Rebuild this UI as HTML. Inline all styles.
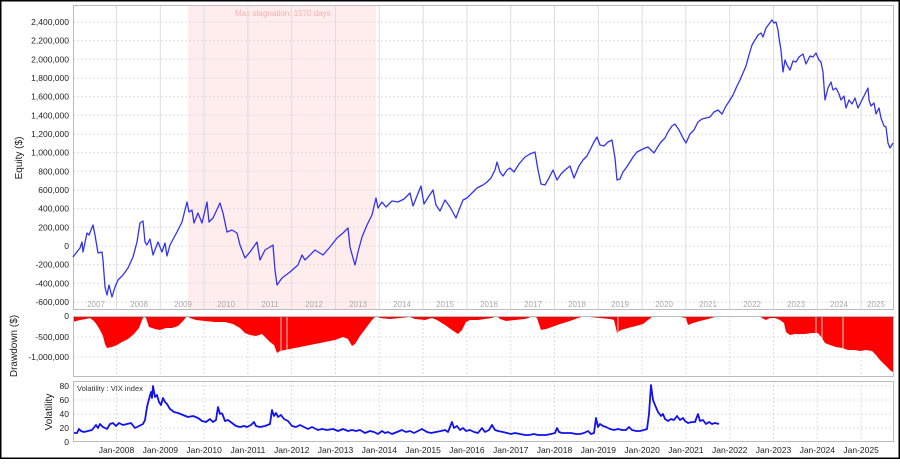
<!DOCTYPE html>
<html><head><meta charset="utf-8"><style>
html,body{margin:0;padding:0;background:#fff}
body{width:900px;height:459px;overflow:hidden;font-family:"Liberation Sans",sans-serif}
</style></head><body>
<svg width="900" height="459" viewBox="0 0 900 459" xmlns="http://www.w3.org/2000/svg" font-family="Liberation Sans, sans-serif">
<rect x="0.5" y="0.5" width="899" height="458" fill="#fff" stroke="#000" stroke-width="2"/>
<rect x="188" y="5" width="188" height="305" fill="#ffeded"/>
<text x="235" y="16" font-size="8" fill="#f6b0b0">Max stagnation: 1570 days</text>
<g stroke="#ddd" stroke-dasharray="2,2" stroke-width="1">
<line x1="73" x2="893" y1="22" y2="22"/><line x1="73" x2="893" y1="40.7" y2="40.7"/><line x1="73" x2="893" y1="59.3" y2="59.3"/><line x1="73" x2="893" y1="78" y2="78"/><line x1="73" x2="893" y1="96.7" y2="96.7"/><line x1="73" x2="893" y1="115.3" y2="115.3"/><line x1="73" x2="893" y1="134" y2="134"/><line x1="73" x2="893" y1="152.7" y2="152.7"/><line x1="73" x2="893" y1="171.3" y2="171.3"/><line x1="73" x2="893" y1="190" y2="190"/><line x1="73" x2="893" y1="208.7" y2="208.7"/><line x1="73" x2="893" y1="227.3" y2="227.3"/><line x1="73" x2="893" y1="246" y2="246"/><line x1="73" x2="893" y1="264.7" y2="264.7"/><line x1="73" x2="893" y1="283.3" y2="283.3"/><line x1="73" x2="893" y1="302" y2="302"/>
</g>
<g stroke="#ddd" stroke-width="1">
<line x1="116.5" x2="116.5" y1="5" y2="310"/><line x1="160.3" x2="160.3" y1="5" y2="310"/><line x1="204.1" x2="204.1" y1="5" y2="310"/><line x1="247.9" x2="247.9" y1="5" y2="310"/><line x1="291.7" x2="291.7" y1="5" y2="310"/><line x1="335.5" x2="335.5" y1="5" y2="310"/><line x1="379.3" x2="379.3" y1="5" y2="310"/><line x1="423.1" x2="423.1" y1="5" y2="310"/><line x1="466.9" x2="466.9" y1="5" y2="310"/><line x1="510.7" x2="510.7" y1="5" y2="310"/><line x1="554.5" x2="554.5" y1="5" y2="310"/><line x1="598.3" x2="598.3" y1="5" y2="310"/><line x1="642.1" x2="642.1" y1="5" y2="310"/><line x1="685.9" x2="685.9" y1="5" y2="310"/><line x1="729.7" x2="729.7" y1="5" y2="310"/><line x1="773.5" x2="773.5" y1="5" y2="310"/><line x1="817.3" x2="817.3" y1="5" y2="310"/><line x1="861.1" x2="861.1" y1="5" y2="310"/>
</g>
<g font-size="8" fill="#aaa" text-anchor="middle">
<text x="96" y="307">2007</text><text x="139" y="307">2008</text><text x="183" y="307">2009</text><text x="226" y="307">2010</text><text x="270" y="307">2011</text><text x="314" y="307">2012</text><text x="358" y="307">2013</text><text x="402" y="307">2014</text><text x="445" y="307">2015</text><text x="489" y="307">2016</text><text x="533" y="307">2017</text><text x="577" y="307">2018</text><text x="620" y="307">2019</text><text x="664" y="307">2020</text><text x="708" y="307">2021</text><text x="752" y="307">2022</text><text x="796" y="307">2023</text><text x="839" y="307">2024</text><text x="876" y="307">2025</text>
</g>
<rect x="73.5" y="5.5" width="820" height="304" fill="none" stroke="#bbb"/>
<g font-size="8.5" fill="#222" text-anchor="end">
<text x="69" y="25">2,400,000</text><text x="69" y="43.7">2,200,000</text><text x="69" y="62.3">2,000,000</text><text x="69" y="81">1,800,000</text><text x="69" y="99.7">1,600,000</text><text x="69" y="118.3">1,400,000</text><text x="69" y="137">1,200,000</text><text x="69" y="155.7">1,000,000</text><text x="69" y="174.3">800,000</text><text x="69" y="193">600,000</text><text x="69" y="211.7">400,000</text><text x="69" y="230.3">200,000</text><text x="69" y="249">0</text><text x="69" y="267.7">-200,000</text><text x="69" y="286.3">-400,000</text><text x="69" y="305">-600,000</text>
</g>
<text transform="translate(22,158) rotate(-90)" font-size="10" fill="#222" text-anchor="middle">Equity ($)</text>
<polyline fill="none" stroke="#3333ee" stroke-width="1.3" stroke-linejoin="round" points="73,257 80,248 82,242 83,252 87,233 89,235 93,225 95,235 98,253 102,252 103,260 105,287 107,295 109,285 112,297 115,287 118,280 123,275 128,268 133,257 137,242 140,223 143,221 145,242 147,245 150,239 153,255 158,242 162,252 165,243 167,256 170,245 177,232 182,222 187,202 189,212 192,210 194,223 198,213 202,223 207,202 209,222 213,218 220,203 223,213 227,232 232,230 237,233 240,245 245,258 250,252 257,242 260,260 265,250 270,247 273,245 275,270 277,285 282,278 290,272 298,265 302,255 305,260 315,250 323,255 330,247 337,238 343,233 348,228 350,247 353,258 355,265 358,252 362,237 367,225 372,215 376,198 378,208 382,202 386,207 392,201 398,202 404,199 410,193 413,206 417,196 421,186 424,204 429,196 433,190 436,205 440,211 445,200 450,207 456,218 459,210 463,200 467,198 472,193 477,188 483,185 487,182 491,178 495,170 497,162 500,172 503,176 507,170 510,168 514,172 519,164 525,157 530,154 535,152 538,170 541,184 545,185 549,178 553,170 557,180 561,174 565,170 570,166 574,178 579,166 583,160 587,156 590,150 594,142 597,137 600,145 604,146 608,142 612,140 615,158 617,180 620,179 623,172 626,168 630,162 633,157 637,152 641,150 645,148 648,147 651,150 654,153 657,148 661,142 665,138 668,132 672,126 675,124 679,130 683,138 686,143 690,134 694,130 698,122 702,119 706,118 710,117 714,112 718,110 722,114 726,106 730,100 733,95 737,86 740,80 743,73 746,66 749,55 752,45 755,40 758,35 761,33 763,37 766,28 769,24 772,20 774,23 776,22 778,30 779,38 781,50 783,72 785,60 787,65 790,70 793,61 796,62 799,57 803,54 806,64 810,56 813,57 816,53 819,60 821,62 823,72 825,100 828,88 831,82 833,90 836,88 839,94 841,100 844,96 846,108 849,100 852,104 855,98 858,108 861,102 864,96 866,92 868,88 869,100 871,106 874,103 876,114 879,108 881,118 884,126 886,127 888,143 890,148 893,143"/>
<g stroke="#ddd" stroke-dasharray="2,2">
<line x1="73" x2="893" y1="337" y2="337"/><line x1="73" x2="893" y1="357" y2="357"/>
<line x1="116.5" x2="116.5" y1="316" y2="376"/><line x1="160.3" x2="160.3" y1="316" y2="376"/><line x1="204.1" x2="204.1" y1="316" y2="376"/><line x1="247.9" x2="247.9" y1="316" y2="376"/><line x1="291.7" x2="291.7" y1="316" y2="376"/><line x1="335.5" x2="335.5" y1="316" y2="376"/><line x1="379.3" x2="379.3" y1="316" y2="376"/><line x1="423.1" x2="423.1" y1="316" y2="376"/><line x1="466.9" x2="466.9" y1="316" y2="376"/><line x1="510.7" x2="510.7" y1="316" y2="376"/><line x1="554.5" x2="554.5" y1="316" y2="376"/><line x1="598.3" x2="598.3" y1="316" y2="376"/><line x1="642.1" x2="642.1" y1="316" y2="376"/><line x1="685.9" x2="685.9" y1="316" y2="376"/><line x1="729.7" x2="729.7" y1="316" y2="376"/><line x1="773.5" x2="773.5" y1="316" y2="376"/><line x1="817.3" x2="817.3" y1="316" y2="376"/><line x1="861.1" x2="861.1" y1="316" y2="376"/>
</g>
<polygon fill="#ff0000" points="73,316 73,322 80,320 86,319 90,318 94,321 97,325 100,330 103,336 105,344 107,348 112,347 117,345 122,342 128,339 134,334 139,328 142,320 144,316 146,318 149,327 155,329 160,330 166,328 172,328 178,326 183,321 187,316 190,318 196,320 205,321 215,322 225,322 233,324 240,328 245,333 250,335 256,336 262,334 266,338 270,342 274,345 277,353 280,351 285,350 295,348 305,346 315,344 325,342 335,340 343,337 348,339 352,346 355,344 360,336 366,328 372,320 376,316 380,318 390,319 400,318 410,317 415,319 425,320 432,318 437,320 445,325 452,330 458,334 462,330 466,322 470,320 478,320 485,319 492,318 497,316 500,319 506,321 515,320 525,319 534,316 537,318 541,330 546,329 552,327 560,324 570,321 578,318 585,316 590,317 600,318 610,319 614,320 617,333 621,330 628,328 636,326 643,324 648,320 652,317 660,317 670,317 680,317 686,318 688,325 693,323 700,321 708,319 715,317 722,317 730,316 760,316 762,318 766,320 770,318 775,318 780,320 784,323 786,332 790,335 795,334 800,334 805,334 812,333 818,333 822,338 825,343 830,345 836,347 842,348 848,350 855,350 860,351 866,350 872,351 876,355 880,360 884,364 888,368 891,371 893,372 893,316"/>
<g stroke="#fff" stroke-width="0.8"><line x1="281" x2="281" y1="316" y2="354"/><line x1="287" x2="287" y1="316" y2="354"/><line x1="618" x2="618" y1="316" y2="336"/><line x1="816" x2="816" y1="316" y2="345"/><line x1="822" x2="822" y1="316" y2="345"/><line x1="843" x2="843" y1="316" y2="350"/></g>
<rect x="73.5" y="316.5" width="820" height="60" fill="none" stroke="#bbb"/>
<g font-size="8.5" fill="#222" text-anchor="end"><text x="69" y="319">0</text><text x="69" y="340">-500,000</text><text x="69" y="360">-1,000,000</text></g>
<text transform="translate(17,346) rotate(-90)" font-size="10" fill="#222" text-anchor="middle">Drawdown ($)</text>
<g stroke="#ddd" stroke-dasharray="2,2">
<line x1="73" x2="893" y1="386" y2="386"/><line x1="73" x2="893" y1="400" y2="400"/><line x1="73" x2="893" y1="414" y2="414"/><line x1="73" x2="893" y1="428" y2="428"/>
<line x1="116.5" x2="116.5" y1="381" y2="442"/><line x1="160.3" x2="160.3" y1="381" y2="442"/><line x1="204.1" x2="204.1" y1="381" y2="442"/><line x1="247.9" x2="247.9" y1="381" y2="442"/><line x1="291.7" x2="291.7" y1="381" y2="442"/><line x1="335.5" x2="335.5" y1="381" y2="442"/><line x1="379.3" x2="379.3" y1="381" y2="442"/><line x1="423.1" x2="423.1" y1="381" y2="442"/><line x1="466.9" x2="466.9" y1="381" y2="442"/><line x1="510.7" x2="510.7" y1="381" y2="442"/><line x1="554.5" x2="554.5" y1="381" y2="442"/><line x1="598.3" x2="598.3" y1="381" y2="442"/><line x1="642.1" x2="642.1" y1="381" y2="442"/><line x1="685.9" x2="685.9" y1="381" y2="442"/><line x1="729.7" x2="729.7" y1="381" y2="442"/><line x1="773.5" x2="773.5" y1="381" y2="442"/><line x1="817.3" x2="817.3" y1="381" y2="442"/><line x1="861.1" x2="861.1" y1="381" y2="442"/>
</g>
<text x="77" y="391" font-size="7.5" fill="#333">Volatility : VIX index</text>
<g fill="none" stroke="#1111ee" stroke-width="1.8" stroke-linejoin="round">
<polyline points="73,433 77,433 79,429 81,431 84,432 88,431 92,430 96,425 98,428 100,424 103,427 107,429 110,424 113,423 116,426 119,423 123,425 127,424 131,423 135,428 139,426 143,424 145,420 147,407 149,399 151,392 152,398 153,386 155,397 157,395 159,402 161,405 163,398 165,402 167,404 170,409 174,412 178,413 183,415 188,417 193,416 198,418 202,421 206,422 210,419 213,422 216,420 218,407 220,414 222,413"/>
<polyline points="222,413 225,421 228,420 232,423 236,426 240,427 244,426 247,427 251,425 254,422 256,426 260,427 265,426 270,424 272,410 274,416 276,413 278,417 281,415 284,419 288,421 292,426 296,427 300,425 304,427 308,429 312,427 318,430 322,429 327,430 333,429 338,431 343,429 348,431 352,430 356,431 360,430 365,433 370,431 374,432 378,434 382,431 385,433 388,432 392,434 397,432 402,430 406,432 410,431 414,433 418,431 422,429 427,432 431,433 436,432 441,431 445,430 448,432 452,422 454,428 457,426 460,430 463,428 466,431 470,430 474,432 478,433 482,428 485,432 489,430 492,425 495,430 498,431 503,432 507,433 511,434 515,433 520,434 525,435 529,435 534,434 538,435 542,435 546,435 551,434 555,433 557,428 559,432 562,433 566,433 571,433 576,434 580,434 584,433 588,431 591,434 594,433 596,418 598,427 600,424 603,426 606,427 610,429 614,430 618,429 622,430 626,430 629,427 632,430 636,431 640,431 644,430 647,429 649,414 651,385 653,400 655,405 658,412 661,416 663,414 665,419 668,421 671,419 674,420 677,416 680,420 683,418 685,421 688,423 692,422 695,422 698,414 700,421 703,420 706,424 709,422 712,424 715,423 719,424"/>
</g>
<rect x="73.5" y="381.5" width="820" height="60" fill="none" stroke="#bbb"/>
<g font-size="8.5" fill="#222" text-anchor="end"><text x="69" y="389">80</text><text x="69" y="403">60</text><text x="69" y="417">40</text><text x="69" y="431">20</text><text x="69" y="445">0</text></g>
<text transform="translate(52,412) rotate(-90)" font-size="10" fill="#222" text-anchor="middle">Volatility</text>
<g font-size="8.5" fill="#222" text-anchor="middle">
<text x="116.5" y="453">Jan-2008</text><text x="160.3" y="453">Jan-2009</text><text x="204.1" y="453">Jan-2010</text><text x="247.9" y="453">Jan-2011</text><text x="291.7" y="453">Jan-2012</text><text x="335.5" y="453">Jan-2013</text><text x="379.3" y="453">Jan-2014</text><text x="423.1" y="453">Jan-2015</text><text x="466.9" y="453">Jan-2016</text><text x="510.7" y="453">Jan-2017</text><text x="554.5" y="453">Jan-2018</text><text x="598.3" y="453">Jan-2019</text><text x="642.1" y="453">Jan-2020</text><text x="685.9" y="453">Jan-2021</text><text x="729.7" y="453">Jan-2022</text><text x="773.5" y="453">Jan-2023</text><text x="817.3" y="453">Jan-2024</text><text x="861.1" y="453">Jan-2025</text>
</g>
</svg>
</body></html>
